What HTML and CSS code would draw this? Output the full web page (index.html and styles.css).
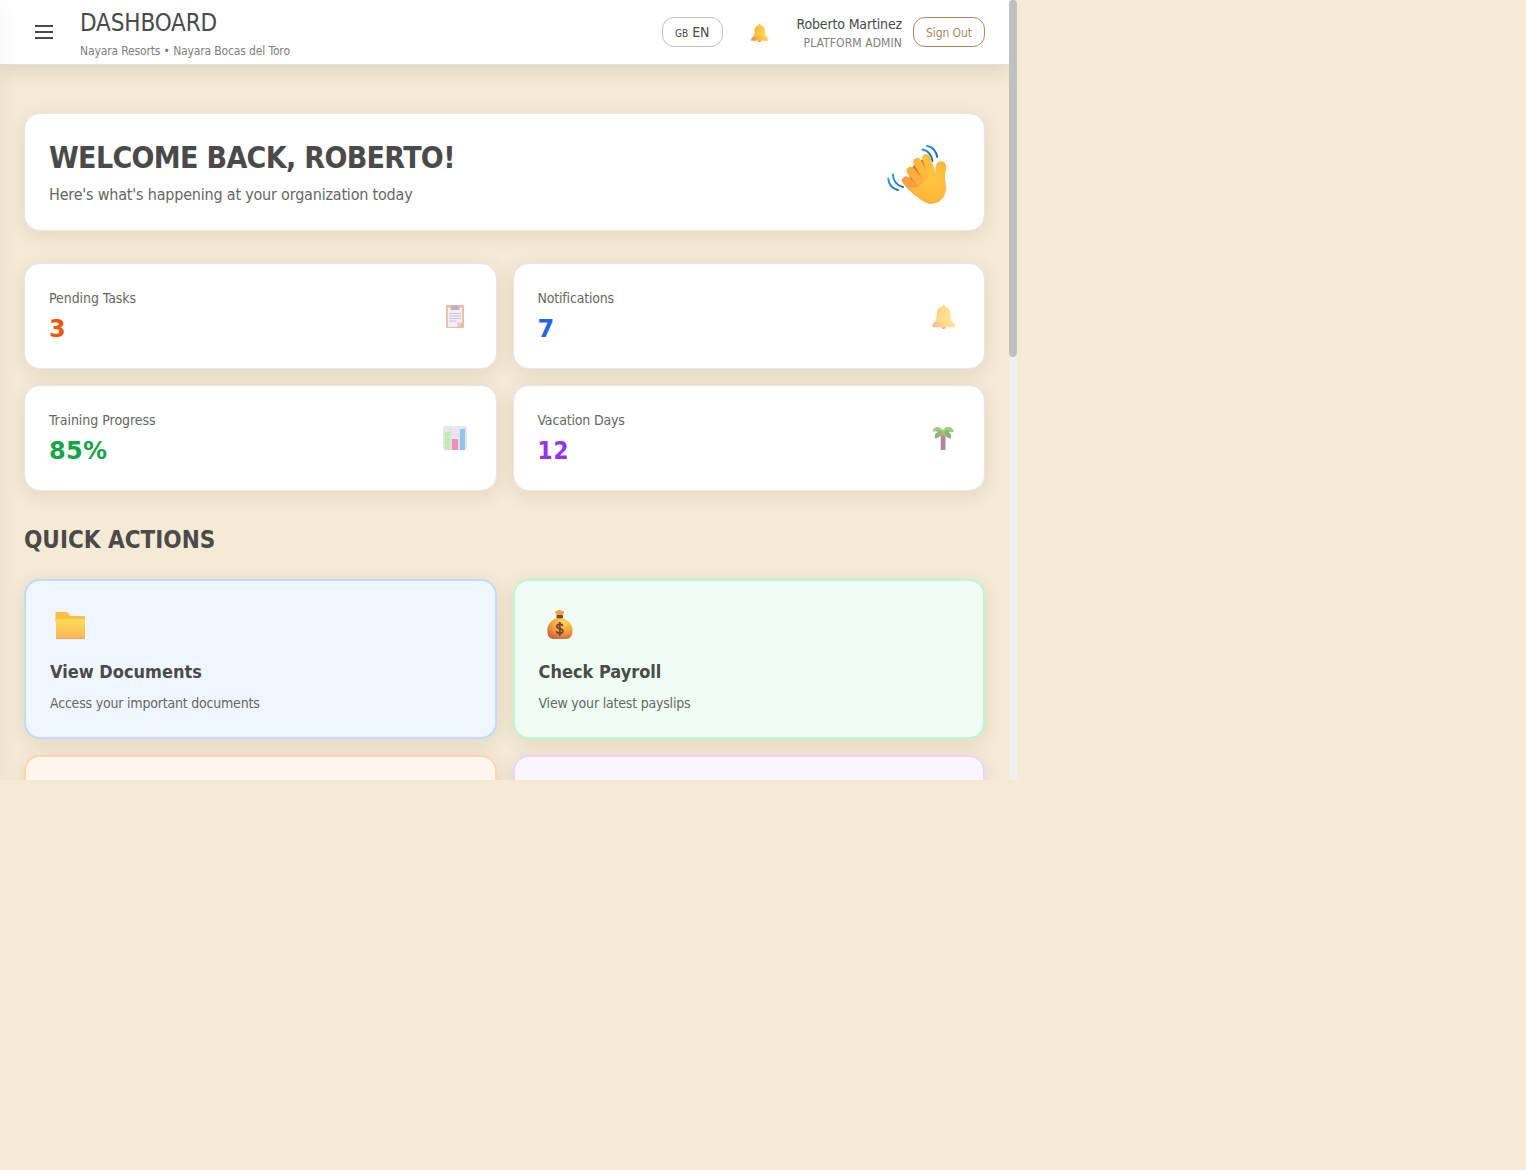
FILE: index.html
```
<!DOCTYPE html>
<html lang="en">
<head>
<meta charset="utf-8">
<title>Dashboard</title>
<link rel="stylesheet" href="styles.css">
</head>
<body>
<svg class="defs" width="0" height="0" aria-hidden="true">
  <defs>
    <linearGradient id="bellFill" x1="0" y1="0" x2="1" y2="0.25"><stop offset="0" stop-color="#f9a23c"/><stop offset=".55" stop-color="#ffc640"/><stop offset="1" stop-color="#ffdc55"/></linearGradient>
    <linearGradient id="bellRim" x1="0" y1="0" x2="1" y2="0"><stop offset="0" stop-color="#f28b4a"/><stop offset=".5" stop-color="#ffbe3b"/><stop offset="1" stop-color="#ffd65a"/></linearGradient>
    <symbol id="bell" viewBox="0 0 24 24">
      <circle cx="11.5" cy="22.3" r="1.9" fill="#ef7d4d"/>
      <circle cx="11.5" cy="1.6" r="1.5" fill="#fbb33c"/>
      <path d="M11.500 1.500C7.500 1.500 5.200 4 4.800 8L4.200 14.500C4 16.500 1 18 .3 19.500H23.200C22.500 18 19.500 16.500 19.300 14.500L18.500 8C18 4 15.500 1.500 11.500 1.500Z" fill="url(#bellFill)"/>
      <path d="M4 17H19.700C21.500 17.800 23.300 19.300 23.300 21C23.300 21.900 22.800 22.300 21.800 22.300H1.700C.6 22.300 .2 21.900 .2 21C.2 19.300 2 17.800 4 17Z" fill="url(#bellRim)"/>
    </symbol>
  </defs>
</svg>
<div class="app">
  <div class="viewport">
    <header class="topbar">
      <svg class="menu" viewBox="0 0 18 14" width="18" height="14"><path d="M0 1H18M0 7H18M0 13H18" stroke="#4a4a4a" stroke-width="2"/></svg>
      <div class="heading">
        <div class="title">DASHBOARD</div>
        <div class="subtitle">Nayara Resorts • Nayara Bocas del Toro</div>
      </div>
      <button class="lang"><small>GB</small><span>EN</span></button>
      <svg class="bell" width="18" height="18"><use href="#bell"/></svg>
      <div class="user">
        <div class="name">Roberto Martinez</div>
        <div class="role">PLATFORM ADMIN</div>
      </div>
      <button class="signout">Sign Out</button>
    </header>
    <main class="main">
      <section class="card hero">
        <div>
          <h1>WELCOME BACK, ROBERTO!</h1>
          <p>Here's what's happening at your organization today</p>
        </div>
        <svg class="wave" width="60" height="60" viewBox="0 0 60 60">
          <defs>
            <radialGradient id="palm" gradientUnits="userSpaceOnUse" cx="44" cy="35" r="30"><stop offset="0" stop-color="#ffc63d"/><stop offset=".7" stop-color="#ffb63b"/><stop offset="1" stop-color="#f58b50"/></radialGradient>
            <linearGradient id="motion" x1="0" y1="0" x2="1" y2="1"><stop offset="0" stop-color="#2698e3"/><stop offset="1" stop-color="#1763ae"/></linearGradient>
          </defs>
          <g fill="none" stroke="url(#motion)" stroke-width="1.900" stroke-linecap="round"><path d="M1.200 33.500C1.500 39.500 5.500 44 11 45"/><path d="M5.800 29.500C6.300 36 10 40.500 16 42"/><path d="M35.500 4.500C40.500 5 44.500 9.500 45.500 16"/><path d="M40 1C45.500 1.500 49.500 6.500 50.200 12"/></g>
          <path d="M22 31L26 21L33 15L43 13L48 27L42 44H26Z" fill="#d97a2e"/>
          <g fill="none" stroke-linecap="round" stroke-width="8"><path d="M19 35.500L33 46" stroke="#fb9d44"/><path d="M23.500 26L38 42" stroke="#ffae3b"/><path d="M30.200 17L42 37" stroke="#ffb83c"/><path d="M39.400 13L46.500 34" stroke="#ffbf3f"/></g>
          <path d="M31 42C36 38 41 32 48.500 29C48 21 49.500 16.200 53.700 16.200C58 16.200 59.700 19.300 59 24C58.400 28 57.600 31 58.200 35C60 45 58.700 50.500 54 55C49 59.800 41.500 60 35.500 56C28 51 21 44.500 16.200 38.700C22 42 27 44 31 42Z" fill="url(#palm)"/>
        </svg>
      </section>
      <section class="stats">
        <div class="card stat orange">
          <div><div class="label l1">Pending Tasks</div><div class="value wide">3</div></div>
          <svg class="ico clip-ico" width="24" height="24" viewBox="0 0 24 24"><rect x="3" width="18" height="23" rx="1" fill="#dd864c"/><path d="M4.800 2.500H19.200V17.500L14.500 22H4.800Z" fill="#e8dff5"/><path d="M19.200 17.300H14V22Z" fill="#beb0d5"/><path d="M7.500 5V2.300C8 1 9.800 1.700 10.300 .3H13.700C14.200 1.700 16 1 16.500 2.300V5Z" fill="#80748c"/><path d="M6 8.500H18M6 11H18M6 13.500H18M6 16H13.500" stroke="#9f93b0"/></svg>
        </div>
        <div class="card stat blue">
          <div><div class="label l2">Notifications</div><div class="value wide">7</div></div>
          <svg class="ico bell-ico" width="24" height="24"><use href="#bell"/></svg>
        </div>
        <div class="card stat green">
          <div><div class="label l3">Training Progress</div><div class="value wide">85%</div></div>
          <svg class="ico" width="24" height="24" viewBox="0 0 24 24"><rect width="24" height="24" rx="2" fill="#dcd5e4"/><path d="M0 8.500H24M0 16.500H24M8 0V24M16 0V24" stroke="#bbb2c8" stroke-width=".8"/><rect x="2" y="6" width="5" height="18" fill="#89df73"/><rect x="9" y="13" width="6" height="11" fill="#e83576"/><rect x="17" y="3" width="5" height="21" fill="#3295df"/></svg>
        </div>
        <div class="card stat purple">
          <div><div class="label l4">Vacation Days</div><div class="value">12</div></div>
          <svg class="ico palm-ico" width="24" height="24" viewBox="0 0 24 24"><path d="M8.700 8H13.500V24H8.700Z" fill="#94576b"/><path d="M11 4.500C8 .2 2.500-.5 .5 5.500C3 5 5 5 6.500 5.800C3 7 2 10 3.500 13C7 11 9.500 9.500 11 7C12.500 9.500 14.500 11 18.500 13C20 9 18.500 7 16 5.800L21.700 5.700C20 0 14-.5 11 4.500Z" fill="#4d9c38"/><path d="M11 4.500C8 .2 2.500-.5 .5 5.500C4 3.500 8 3.500 11 7C14 3.500 17 3.700 21.700 5.700C20 0 14-.5 11 4.500Z" fill="#79bd43"/><circle cx="9.300" cy="8" r="1.500" fill="#d07255"/><circle cx="12.500" cy="8.800" r="1.500" fill="#d07255"/></svg>
        </div>
      </section>
      <h2>QUICK ACTIONS</h2>
      <section class="actions">
        <div class="action docs">
          <svg width="40" height="40" viewBox="0 0 40 40"><defs><linearGradient id="folder" x1="0" y1="0" x2="0" y2="1"><stop offset="0" stop-color="#ffdf54"/><stop offset="1" stop-color="#ffb158"/></linearGradient></defs><path d="M5.500 7.500Q5.500 7 6 7H16.500Q17.500 7 18.200 8L20.500 11H34.500Q35 11 35 11.500V17H5.500Z" fill="#ffbd42"/><path d="M6 14H35V33.500Q35 34 34.500 34H6.500Q6 34 6 33.500Z" fill="url(#folder)"/><path d="M6.300 33.500H34.700" stroke="#fba35d"/></svg>
          <h3>View Documents</h3>
          <p>Access your important documents</p>
        </div>
        <div class="action pay">
          <svg width="40" height="40" viewBox="0 0 40 40"><defs><radialGradient id="bag" cx=".65" cy=".2" r=".85"><stop offset="0" stop-color="#ffdb59"/><stop offset=".55" stop-color="#f7a237"/><stop offset="1" stop-color="#cf6641"/></radialGradient></defs><path d="M18 11L16.200 7.500Q15.800 5.500 18 6.200Q20.500 3.500 23 6.200Q25.500 5.500 25 7.500L23.500 11Z" fill="#f7a239"/><path d="M17 13C11.500 16 8.300 20 8.300 25.500C8.300 31.500 11 34 15 34H27C31 34 33.500 31 33.500 25.500C33.500 20 30 16 24.500 13Z" fill="url(#bag)"/><rect x="17.500" y="10" width="6.500" height="3.300" rx="1" fill="#7b443f"/><path d="M23.800 20.800C22.800 18.500 17.900 18.800 17.900 21.400C17.900 24.400 23.900 22.700 23.900 26C23.900 28.900 18.300 29 17.400 26.300M20.800 17V31" fill="none" stroke="#7b443f" stroke-width="1.900"/></svg>
          <h3>Check Payroll</h3>
          <p>View your latest payslips</p>
        </div>
        <div class="action third"></div>
        <div class="action fourth"></div>
      </section>
    </main>
    <div class="edge"></div>
  </div>
  <div class="track"><div class="thumb"></div></div>
</div>
</body>
</html>
```
FILE: styles.css
```
* { box-sizing: border-box; margin: 0; padding: 0; }
body { background: #f5ead6; color: #4a4a4a; font-family: "DejaVu Sans Condensed", "DejaVu Sans", sans-serif; font-stretch: condensed; }
.defs { position: absolute; }
.app { display: flex; width: 1017px; height: 780px; overflow: hidden; }
.viewport { position: relative; width: 1009px; height: 780px; overflow: hidden; }
.track { width: 8px; background: #f0f0f0; }
.thumb { height: 357px; border-radius: 4px; background: #c0c0c0; }
.edge { position: absolute; left: -10px; top: 0; width: 10px; height: 780px; box-shadow: 0 10px 20px rgba(60, 50, 30, .09); }

.topbar { position: relative; display: flex; align-items: center; height: 65px; padding: 0 24px 1px 35px; background: #fff; border-bottom: 1px solid #e0e0e0; box-shadow: 0 4px 20px rgba(74, 60, 20, .15); white-space: nowrap; }
.menu { flex: none; margin-right: 27px; }
.heading { flex: 1; padding-top: 2px; }
.title { height: 36px; line-height: 36px; font-size: 24px; letter-spacing: -.130px; }
.subtitle { height: 20px; line-height: 20px; font-size: 12px; letter-spacing: -.140px; color: #808080; }
.lang { display: flex; align-items: baseline; gap: 4px; width: 61px; height: 30px; padding: 5px 12px; border: 1px solid #c0c0c0; border-radius: 12px; background: #fff; color: #4a4a4a; font: inherit; font-size: 14px; line-height: 19px; }
.lang small { font-size: 10px; }
.bell { margin: 3px 27px 0 28px; }
.user { width: 106px; padding-top: 4px; text-align: right; margin-right: 11px; }
.name { height: 18px; line-height: 16px; font-size: 14px; letter-spacing: -.150px; }
.role { height: 18px; line-height: 18px; font-size: 12px; letter-spacing: .1px; color: #808080; }
.signout { width: 72px; height: 30px; padding-top: 2px; border: 1px solid #aa8a60; border-radius: 12px; background: #fff; color: #aa8a60; font: inherit; font-size: 12px; letter-spacing: -.1px; }

.main { padding: 48px 24px 0; white-space: nowrap; }
.card { display: flex; align-items: center; justify-content: space-between; padding: 24px; background: #fff; border: 1px solid #e5e7eb; border-radius: 16px; box-shadow: 0 4px 20px rgba(74, 60, 20, .11); }
.hero { height: 118px; }
.hero h1 { height: 36px; line-height: 40px; font-size: 30px; letter-spacing: -.670px; }
.hero p { margin-top: 8px; padding-top: 1px; height: 24px; line-height: 24px; font-size: 16px; letter-spacing: -.2px; color: #666; }
.wave { margin: 6px 13px 0 0; }
.stats, .actions { display: grid; grid-template-columns: 1fr 1fr; gap: 16px; }
.stats { margin-top: 32px; }
.stat { height: 106px; }
.label { height: 20px; line-height: 20px; font-size: 14px; color: #666; }
.l1 { letter-spacing: -.060px; }
.l2, .l4 { letter-spacing: -.180px; }
.l3 { letter-spacing: -.030px; }
.value { margin-top: 4px; height: 32px; line-height: 34px; font-size: 24px; font-weight: 700; letter-spacing: 1px; }
.wide { font-family: "DejaVu Sans", sans-serif; font-stretch: normal; letter-spacing: .3px; }
.orange .value { color: #ea580c; }
.blue .value { color: #2563eb; }
.green .value { color: #16a34a; }
.purple .value { color: #9333ea; }
.ico { margin: 0 5px 0 0; opacity: .55; }
.clip-ico { margin-top: 1px; }
.bell-ico { margin: 1px 4px 0 0; opacity: .6; }
.palm-ico { margin-right: 4px; opacity: .7; }
h2 { height: 32px; margin: 32px 0 24px; line-height: 34px; font-size: 24px; letter-spacing: 0; }
.action { height: 160px; padding: 24px; border: 2px solid; border-radius: 16px; box-shadow: 0 4px 20px rgba(74, 60, 20, .11); }
.action svg { display: block; }
.action h3 { height: 28px; margin-top: 12px; line-height: 30px; font-size: 18px; }
.action p { margin-top: 8px; line-height: 20px; font-size: 14px; letter-spacing: -.2px; color: #666; }
.docs { background: #eff6ff; border-color: #bfdbfe; }
.pay { background: #f0fdf4; border-color: #bbf7d0; }
.third { background: #fff7ed; border-color: #fed7aa; }
.fourth { background: #faf5ff; border-color: #e9d5ff; }
```
